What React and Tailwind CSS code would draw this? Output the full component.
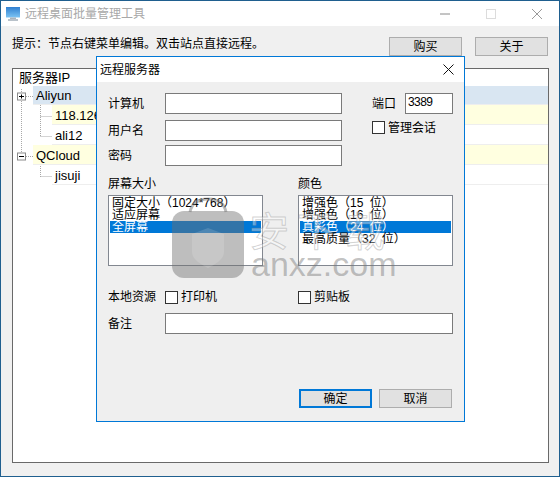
const font = { fontFamily: '"Liberation Sans","Noto Sans CJK SC",sans-serif' };

function Input({ className = "", children }) {
  return <div className={"h-[21px] border border-[#7a7a7a] bg-white text-[12px] leading-[17px] pl-[2px] text-black " + className}>{children}</div>;
}
function Check({ label }) {
  return (
    <div className="flex items-center gap-[3px]">
      <div className="w-[13px] h-[13px] border border-[#333] bg-white" />
      <span>{label}</span>
    </div>
  );
}
function Btn({ children, primary }) {
  return (
    <div className={"w-[73px] h-[19px] bg-[#e1e1e1] flex items-center justify-center leading-none " + (primary ? "border-2 border-[#0078d7]" : "border border-[#adadad]")}>
      {children}
    </div>
  );
}
function ListBox({ items }) {
  return (
    <div className="w-[155px] h-[71px] bg-white border border-[#828790] pt-[1px] px-[1px] overflow-hidden">
      {items.map((t, i) => (
        <div key={t} className={"h-[12px] leading-[12px] pl-[2px] whitespace-nowrap [word-spacing:3px] " + (i === 2 ? "bg-[#0078d7] text-white" : "text-black")}>
          {t}
        </div>
      ))}
    </div>
  );
}
function TreeRow({ indent, bg = "bg-white", h = "h-[20px] leading-[21px]", children }) {
  return (
    <div className={"flex " + h + " " + indent}>
      <div className={"flex-1 pl-[3px] text-[13px] border-b border-[#eeeeee] text-black " + bg}>{children}</div>
    </div>
  );
}

export default function App() {
  return (
    <div style={font} className="relative w-[560px] h-[477px] overflow-hidden bg-[#f0f0f0] border border-[#1f5f8f] text-[12px] text-black flex flex-col">
      <div className="h-[25px] bg-white flex items-center shrink-0">
        <svg width="14" height="14" viewBox="0 0 14 14" className="ml-[5px]">
          <defs>
            <linearGradient id="scr" x1="0" y1="0" x2="0" y2="1">
              <stop offset="0" stopColor="#2f7fd0" />
              <stop offset="1" stopColor="#7cc4f4" />
            </linearGradient>
          </defs>
          <rect x="0" y="0" width="14" height="10.500" fill="url(#scr)" />
          <rect x="4" y="10.500" width="6" height="1.500" fill="#a9b4bd" />
          <rect x="2" y="12" width="10" height="2" fill="#b9c2ca" />
        </svg>
        <span className="ml-[5px] text-[#a8a8a8]">远程桌面批量管理工具</span>
        <div className="ml-auto flex items-center text-[#8a8a8a]">
          <svg width="10" height="10" viewBox="0 0 10 10" className="mr-[36px]"><path d="M0 5h10" stroke="#8a8a8a" /></svg>
          <svg width="10" height="10" viewBox="0 0 10 10" className="mr-[36px]"><rect x=".5" y=".5" width="9" height="9" fill="none" stroke="#dcdcdc" /></svg>
          <svg width="10" height="10" viewBox="0 0 10 10" className="mr-[17px]"><path d="M0 0l10 10M10 0L0 10" stroke="#9a9a9a" /></svg>
        </div>
      </div>

      <div className="flex h-[42px] pl-[11px] pr-[11px] shrink-0">
        <div className="mt-[11px] leading-[14px]">提示：节点右键菜单编辑。双击站点直接远程。</div>
        <div className="ml-auto mt-[11px] flex gap-[13px]">
          <Btn>购买</Btn>
          <Btn>关于</Btn>
        </div>
      </div>

      <div className="relative mx-[11px] w-[537px] h-[395px] bg-white border border-[#696969]">
        <div className="h-[17px] pl-[6px] leading-[17px] text-[13px]">服务器IP</div>
        <TreeRow indent="pl-[20px]" bg="bg-[#d9e6f2]" h="h-[19px] leading-[19px]">Aliyun</TreeRow>
        <TreeRow indent="pl-[39px]" bg="bg-[#ffffe0]">118.126.1.1</TreeRow>
        <TreeRow indent="pl-[39px]">ali12</TreeRow>
        <TreeRow indent="pl-[20px]" bg="bg-[#ffffe0]">QCloud</TreeRow>
        <TreeRow indent="pl-[39px]">jisuji</TreeRow>
        <svg width="40" height="120" className="absolute left-0 top-0" viewBox="0 0 40 120">
          <g stroke="#a8a8a8" strokeDasharray="1 1" fill="none">
            <path d="M8.500 20v64" />
            <path d="M13 27.500h7" />
            <path d="M13 87.500h7" />
            <path d="M27.500 36v32M27.500 47.500h11M27.500 67.500h11M27.500 97v11M27.500 107.500h11" />
          </g>
          <rect x="4.500" y="24" width="8" height="7" fill="#fff" stroke="#8a8a8a" />
          <path d="M6 27.500h5M8.500 25.500v4" stroke="#000" />
          <rect x="4.500" y="84" width="8" height="7" fill="#fff" stroke="#8a8a8a" />
          <path d="M6 87.500h5" stroke="#000" />
        </svg>
      </div>

      <div className="absolute left-[95px] top-[55px] w-[369px] h-[366px] bg-[#efefef] border border-[#0078d7] flex flex-col">
        <div className="h-[25px] bg-white flex items-center pl-[3px] shrink-0">
          <span>远程服务器</span>
          <svg width="11" height="11" viewBox="0 0 11 11" className="ml-auto mr-[10px]"><path d="M.5.5l10 10M10.500.5l-10 10" stroke="#111" /></svg>
        </div>
        <div className="px-[11px] flex flex-col">
          <div className="mt-[11px] flex">
            <div className="flex flex-col w-[235px]">
              <div className="flex items-center h-[21px]"><span className="w-[57px]">计算机</span><Input className="w-[177px]" /></div>
              <div className="flex items-center h-[21px] mt-[6px]"><span className="w-[57px]">用户名</span><Input className="w-[177px]" /></div>
              <div className="flex items-center h-[21px] mt-[4px]"><span className="w-[57px]">密码</span><Input className="w-[177px]" /></div>
            </div>
            <div className="ml-[29px] flex flex-col">
              <div className="flex items-center h-[21px]"><span className="w-[33px]">端口</span><Input className="w-[48px] tracking-[-0.6px]">3389</Input></div>
              <div className="mt-[3px] h-[21px] flex items-center"><Check label="管理会话" /></div>
            </div>
          </div>
          <div className="mt-[11px] flex">
            <div className="w-[190px]">
              <div className="h-[14px] leading-[14px] mb-[4px]">屏幕大小</div>
              <ListBox items={["固定大小（1024*768）", "适应屏幕", "全屏幕"]} />
            </div>
            <div>
              <div className="h-[14px] leading-[14px] mb-[4px]">颜色</div>
              <ListBox items={["增强色（15 位）", "增强色（16 位）", "真彩色（24 位）", "最高质量（32 位）"]} />
            </div>
          </div>
          <div className="mt-[24px] flex items-center h-[14px]">
            <span className="w-[57px]">本地资源</span>
            <div className="w-[133px]"><Check label="打印机" /></div>
            <Check label="剪贴板" />
          </div>
          <div className="mt-[9px] flex items-center h-[21px]">
            <span className="w-[57px]">备注</span>
            <Input className="w-[288px]" />
          </div>
          <div className="mt-[55px] flex justify-end gap-[7px] pr-[1px]">
            <Btn primary>确定</Btn>
            <Btn>取消</Btn>
          </div>
        </div>
      </div>

      <svg width="72" height="84" viewBox="0 0 72 84" className="absolute left-[171px] top-[195px] pointer-events-none">
        <path d="M18 16C20 6 27 3 36 3s16 3 18 13" fill="none" stroke="#777" strokeOpacity=".5" strokeWidth="3" />
        <rect x="0" y="15" width="72" height="67" rx="12" fill="#6e6e6e" fillOpacity=".45" />
        <path d="M20 38l16-6 16 6v18c0 7-8 12-16 16-8-4-16-9-16-16z" fill="#fff" fillOpacity=".14" />
      </svg>
      <div className="absolute left-[248px] top-[209px] text-[40px] leading-[44px] tracking-[8px] text-white/40 [-webkit-text-stroke:1px_rgba(130,130,130,0.35)] pointer-events-none whitespace-nowrap">安下载</div>
      <div className="absolute left-[250px] top-[244px] text-[34px] leading-[38px] text-[#777]/45 pointer-events-none whitespace-nowrap">anxz.com</div>
    </div>
  );
}
